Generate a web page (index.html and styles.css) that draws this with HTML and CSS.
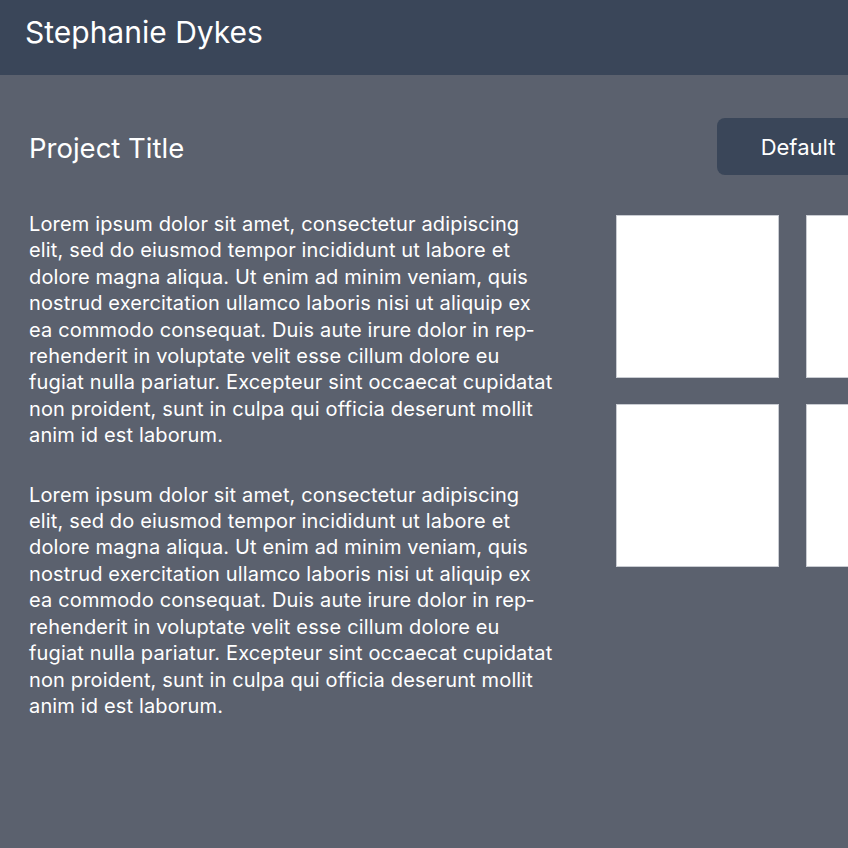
FILE: index.html
```html
<!DOCTYPE html>
<html lang="en">
<head>
<meta charset="utf-8">
<title>Stephanie Dykes</title>
<link rel="stylesheet" href="styles.css">
</head>
<body>
<header class="topbar">
  <h1 class="name">Stephanie Dykes</h1>
</header>
<main class="page">
  <div class="title-row">
    <h2 class="project-title">Project Title</h2>
    <button class="btn">Default</button>
  </div>
  <div class="content">
    <div class="text">
      <p>Lorem ipsum dolor sit amet, consectetur adipiscing elit, sed do eiusmod tempor incididunt ut labore et dolore magna aliqua. Ut enim ad minim veniam, quis nostrud exercitation ullamco laboris nisi ut aliquip ex ea commodo consequat. Duis aute irure dolor in rep&shy;rehenderit in voluptate velit esse cillum dolore eu fugiat nulla pariatur. Excepteur sint occaecat cupidatat non proident, sunt in culpa qui officia deserunt mollit anim id est laborum.</p>
      <p>Lorem ipsum dolor sit amet, consectetur adipiscing elit, sed do eiusmod tempor incididunt ut labore et dolore magna aliqua. Ut enim ad minim veniam, quis nostrud exercitation ullamco laboris nisi ut aliquip ex ea commodo consequat. Duis aute irure dolor in rep&shy;rehenderit in voluptate velit esse cillum dolore eu fugiat nulla pariatur. Excepteur sint occaecat cupidatat non proident, sunt in culpa qui officia deserunt mollit anim id est laborum.</p>
    </div>
    <div class="gallery">
      <div class="tile"></div>
      <div class="tile"></div>
      <div class="tile"></div>
      <div class="tile"></div>
    </div>
  </div>
</main>
</body>
</html>
```

FILE: styles.css
```css
html, body {
  margin: 0;
  padding: 0;
  height: 100%;
  overflow: hidden;
}
body {
  background: #5b616e;
  color: #ffffff;
  font-family: "Inter", "Liberation Sans", sans-serif;
}
.topbar {
  height: 75px;
  background: #3a4659;
  display: flex;
  align-items: center;
  padding-left: 25px;
  box-sizing: border-box;
}
.name {
  margin: 0 0 12px 0;
  font-weight: 400;
  font-size: 30px;
}
.page {
  width: 1100px;
  padding: 43px 0 0 29px;
  box-sizing: border-box;
}
.title-row {
  display: flex;
  align-items: center;
  height: 57px;
}
.project-title {
  margin: 0 0 -2px 0;
  font-weight: 400;
  font-size: 27.5px;
  width: 688px;
}
.btn {
  font-family: inherit;
  font-size: 22px;
  color: #ffffff;
  background: #3a4659;
  border: none;
  border-radius: 8px;
  height: 57px;
  width: 162px;
  padding: 0 0 0 0;
  text-align: center;
}
.content {
  display: flex;
  gap: 62px;
  margin-top: 40px;
}
.text {
  width: 525px;
}
.text p {
  margin: -4px 0 33px 0;
  font-size: 20px;
  line-height: 26.4px;
  letter-spacing: 0.15px;
}
.text p + p {
  margin-top: 0;
}
.gallery {
  display: grid;
  grid-template-columns: 163px 163px;
  grid-auto-rows: 163px;
  column-gap: 27px;
  row-gap: 26px;
}
.tile {
  background: #ffffff;
  border: 1px solid #c9ccd2;
  box-sizing: border-box;
}
```
